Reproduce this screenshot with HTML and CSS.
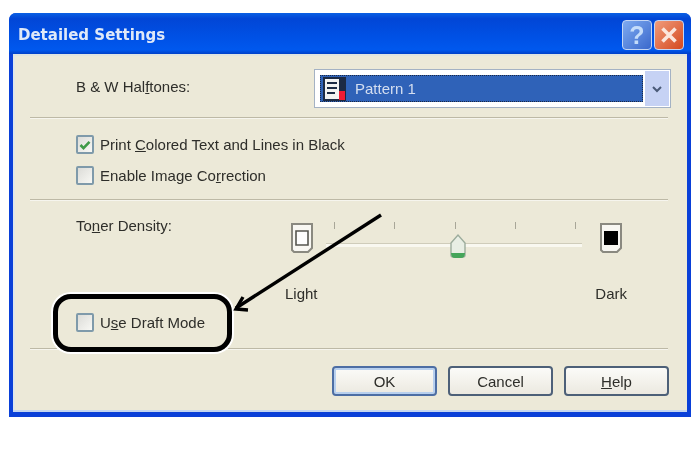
FILE: index.html
```html
<!DOCTYPE html>
<html lang="en">
<head>
<meta charset="utf-8">
<title>Detailed Settings</title>
<link rel="stylesheet" href="styles.css">
</head>
<body>
<div class="window">
  <div class="titlebar">
    <span class="title">Detailed Settings</span>
    <div class="caption-buttons">
      <span class="cap help">?</span>
      <span class="cap close"><svg viewBox="0 0 20 20" width="20" height="20"><path d="M3.5 3.5l13 13M16.5 3.5l-13 13" fill="none" stroke="#fbe6dc" stroke-width="3.6"/></svg></span>
    </div>
  </div>
  <div class="client">
    <section class="row-halftones">
      <span class="label">B &amp; W Hal<u>f</u>tones:</span>
      <div class="combo">
        <div class="combo-value">
          <svg class="combo-icon" viewBox="0 0 24 24" width="24" height="24">
            <path d="M1 0h23v24H1z" fill="#1c2a44"/>
            <path d="M3 2h14v20H3z" fill="#f2f2f2"/>
            <path d="M5 5h10v2H5zM5 10h10v2H5zM5 15h8v2H5z" fill="#1c2a44"/>
            <path d="M17 14h6v9h-6z" fill="#ee1c34"/>
          </svg>
          <span>Pattern 1</span>
        </div>
        <span class="combo-btn">
          <svg viewBox="0 0 12 8" width="12" height="8"><path d="M2 2l4 4 4-4" fill="none" stroke="#4a5a78" stroke-width="2"/></svg>
        </span>
      </div>
    </section>
    <hr class="sep">
    <section class="row-checks">
      <label class="check"><span class="box checked"><svg viewBox="0 0 14 14" width="14" height="14"><path d="M2.5 7l3 3.2 6-6.4" fill="none" stroke="#3f9a48" stroke-width="2.6"/></svg></span><span>Print <u>C</u>olored Text and Lines in Black</span></label>
      <label class="check"><span class="box"></span><span>Enable Image Co<u>r</u>rection</span></label>
    </section>
    <hr class="sep">
    <section class="row-density">
      <div class="density-top">
        <span class="label toner">To<u>n</u>er Density:</span>
        <div class="slider-area">
          <div class="slider-row">
            <svg class="page-icon" viewBox="0 0 24 32" width="24" height="32">
              <path d="M2 2h20v24l-4 4H4l-2-2z" fill="#f8f7f2" stroke="#8a8980" stroke-width="2"/>
              <path d="M6 9h12v14H6z" fill="#fdfdfd" stroke="#55554f" stroke-width="1.6"/>
            </svg>
            <div class="track">
              <div class="ticks"><i></i><i></i><i></i><i></i><i></i></div>
              <div class="rail"></div>
              <svg class="thumb" viewBox="0 0 18 26" width="18" height="26">
                <path d="M2 10l7-8 7 8v12q0 2-2 2H4q-2 0-2-2z" fill="#e8eee4" stroke="#9cac9c" stroke-width="1.4"/>
                <path d="M2 20q0 5 4 5h6q4 0 4-5z" fill="#45a55a"/>
              </svg>
            </div>
            <svg class="page-icon" viewBox="0 0 24 32" width="24" height="32">
              <path d="M2 2h20v24l-4 4H4l-2-2z" fill="#f8f7f2" stroke="#8a8980" stroke-width="2"/>
              <path d="M5 9h14v14H5z" fill="#000"/>
            </svg>
          </div>
          <div class="slider-labels"><span>Light</span><span>Dark</span></div>
        </div>
      </div>
      <label class="check draft"><span class="box"></span><span>U<u>s</u>e Draft Mode</span></label>
    </section>
    <hr class="sep">
    <footer class="buttons">
      <button class="btn default">OK</button>
      <button class="btn">Cancel</button>
      <button class="btn"><u>H</u>elp</button>
    </footer>
  </div>
  <div class="callout"></div>
  <svg class="arrow" viewBox="0 0 150 100" width="150" height="100">
    <path d="M148 2L3 95" fill="none" stroke="#000" stroke-width="3.4"/>
    <path d="M10 84L3 96l12 1" fill="none" stroke="#000" stroke-width="3.4"/>
  </svg>
</div>
</body>
</html>
```
FILE: styles.css
```css
* { box-sizing: border-box; }
html, body { margin: 0; padding: 0; background: #fff; }
body { width: 700px; height: 450px; padding: 13px 9px 0; font-family: "Liberation Sans", Arial, sans-serif; font-size: 15px; color: #2e2e2a; overflow: hidden; }
.window { position: relative; width: 682px; height: 404px; display: flex; flex-direction: column; border-radius: 7px 7px 0 0; background: #0a40d8; overflow: hidden; filter: blur(0.6px); }
.titlebar { height: 41px; flex: none; display: flex; align-items: center; justify-content: space-between; padding: 3px 7px 0 9px; background: linear-gradient(#0a60e4 0%, #0246d6 14%, #0050e4 55%, #0058ee 90%, #0040c8 100%); }
.title { font-family: "DejaVu Sans", Verdana, sans-serif; font-weight: 700; font-size: 15px; color: #dfe9f8; }
.caption-buttons { display: flex; gap: 2px; }
.cap { width: 30px; height: 30px; border: 1px solid #c4d6f4; border-radius: 4px; display: flex; align-items: center; justify-content: center; font-weight: 700; }
.help { background: linear-gradient(135deg, #7eaaf0, #3a68cc); font-size: 25px; color: #c4dcfa; }
.close { background: linear-gradient(135deg, #f09c7c, #d4481e); }
.client { flex: 1; margin: 0 4px 5px 4px; background: #ece9d8; display: flex; flex-direction: column; padding: 0 19px 0 17px; box-shadow: inset 0 2px 0 #e0e4e0, inset 0 -2px 0 #c4d6f0, inset 2px 0 0 #dfe6ea; }
.row-halftones { height: 63px; flex: none; display: flex; align-items: flex-start; padding-left: 46px; padding-top: 15px; }
.label { font-size: 15px; }
.row-halftones .label { padding-top: 9px; }
.combo { margin-left: auto; margin-right: -3px; width: 357px; height: 39px; border: 1px solid #a4b2c4; background: #fff; display: flex; padding: 5px 1px 5px 5px; flex: none; }
.combo-value { flex: 1; display: flex; align-items: center; gap: 9px; padding: 0 0 0 1px; background: #2f62b8; color: #d4def0; border: 1px dotted #1c2a44; }
.combo-btn { width: 24px; margin: -4px 0; display: flex; align-items: center; justify-content: center; background: #c6d2f4; margin-left: 2px; }
.sep { flex: none; height: 2px; margin: 0; border: 0; border-top: 1px solid #bdb9a6; border-bottom: 1px solid #f6f5ee; }
.row-checks { height: 80px; flex: none; display: flex; flex-direction: column; gap: 10px; padding: 15px 0 0 46px; }
.check { display: flex; align-items: center; gap: 6px; height: 21px; font-size: 15px; }
.box { width: 18px; height: 19px; flex: none; border: 2px solid #7f9aaa; border-radius: 2px; background: linear-gradient(135deg, #dcdcd8, #f8f8f4); display: flex; align-items: center; justify-content: center; }
.row-density { height: 147px; flex: none; display: flex; flex-direction: column; padding-left: 46px; }
.density-top { display: flex; }
.toner { padding-top: 16px; width: 214px; flex: none; }
.slider-area { flex: none; width: 333px; display: flex; flex-direction: column; padding-top: 21px; }
.slider-row { display: flex; height: 32px; }
.page-icon { flex: none; }
.track { position: relative; flex: 1; height: 32px; }
.ticks { display: flex; justify-content: space-between; padding: 0 23px 0 20px; height: 7px; }
.ticks i { width: 1px; height: 7px; background: #a8a698; }
.rail { position: absolute; left: 12px; right: 17px; top: 21px; height: 4px; background: #f9f8f0; border-top: 1px solid #cfccba; }
.thumb { position: absolute; left: 135px; top: 11px; }
.slider-labels { display: flex; justify-content: space-between; margin: 0 -4px 0 -5px; padding-top: 31px; line-height: 17px; }
.draft { margin-top: 10px; }
.buttons { display: flex; justify-content: flex-end; gap: 11px; padding-top: 16px; margin-right: -1px; }
.btn { width: 105px; height: 30px; padding: 0; font-family: "Liberation Sans", Arial, sans-serif; font-size: 15px; color: #2e2e2a; border: 2px solid #4d6078; border-radius: 4px; background: linear-gradient(#fbfbf8, #ece9e0); }
.btn.default { border-color: #4d6ea4; box-shadow: inset 0 0 0 2px #b8d0ee; }
.callout { position: absolute; left: 44px; top: 281px; width: 179px; height: 58px; border: 5px solid #000; border-radius: 18px; box-shadow: 0 0 0 2px #fff; }
.arrow { position: absolute; left: 224px; top: 200px; }
```
